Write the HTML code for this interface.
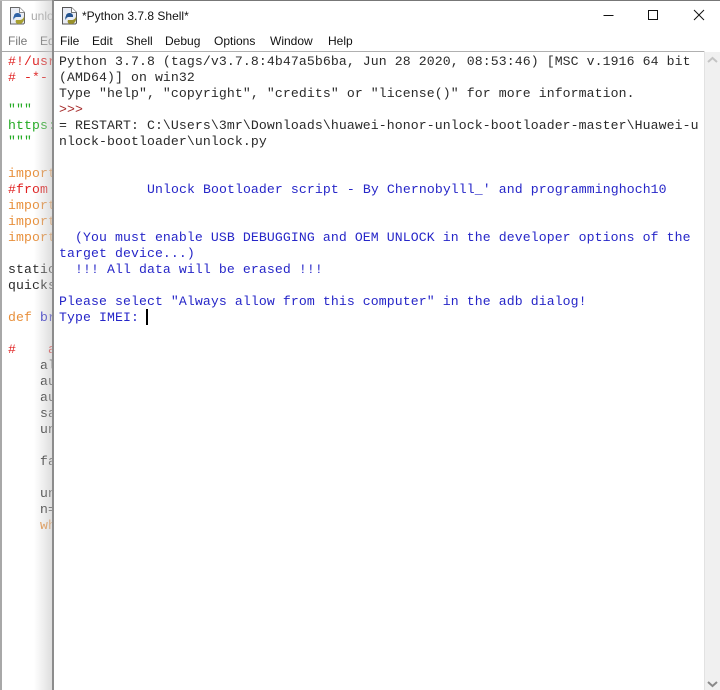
<!DOCTYPE html>
<html><head><meta charset="utf-8"><style>
html,body{margin:0;padding:0}
body{width:720px;height:690px;overflow:hidden;background:#fff;position:relative;font-family:"Liberation Sans",sans-serif}
.a{position:absolute}
.t{position:absolute;font:13.17px/16px "Liberation Mono",monospace;letter-spacing:.1px;white-space:pre;color:#2a2a2a;height:16px}
.m{position:absolute;font:12px/16px "Liberation Sans",sans-serif;top:33px;color:#111;white-space:pre}
.b{color:#2626c8}.k{color:#e8903c}.r{color:#e02020}.g{color:#22aa22}
</style></head><body>
<div class="a" style="left:0;top:0;width:2px;height:690px;background:#a8a8a8"></div>
<div class="a" style="left:2px;top:0;width:50px;height:690px;background:#fff"></div>
<div class="a" style="left:0;top:0;width:52px;height:1px;background:#bbb"></div>
<svg class="a" style="left:8px;top:6px" width="20" height="20" viewBox="0 0 20 20"><path d="M2.500 1.500h9l5 5v10.500l-1 1h-13z" fill="#e9ecf4" stroke="#666"/><path d="M11.500 1.500v5h5" fill="#fff" stroke="#888"/><path d="M6 10c0-4 7-4 7 0v1H9c-2 0-3 1-3 3-1-1-1-3 0-4z" fill="#2f62a6"/><path d="M16 10c1 4-1 8-5 8-3 0-4-2-3-4h4c2 0 4-2 4-4z" fill="#a8a030"/></svg>
<div class="a" style="left:31px;top:8px;font-size:12px;line-height:16px;color:#a8a8a8">unlo</div>
<div class="m" style="left:8px;color:#777">File</div><div class="m" style="left:40px;color:#777">Ed</div>
<div class="a" style="left:2px;top:51px;width:50px;height:1px;background:#a8a8a8"></div>
<div class="t r" style="left:8px;top:54px">#!/usr</div>
<div class="t r" style="left:8px;top:70px"># -*-</div>
<div class="t g" style="left:8px;top:102px">"""</div>
<div class="t g" style="left:8px;top:118px">https:</div>
<div class="t g" style="left:8px;top:134px">"""</div>
<div class="t k" style="left:8px;top:166px">import</div>
<div class="t r" style="left:8px;top:182px">#from</div>
<div class="t k" style="left:8px;top:198px">import</div>
<div class="t k" style="left:8px;top:214px">import</div>
<div class="t k" style="left:8px;top:230px">import</div>
<div class="t" style="left:8px;top:262px">static</div>
<div class="t" style="left:8px;top:278px">quicks</div>
<div class="t" style="left:8px;top:310px"><span class="k">def</span> <span class="b">br</span></div>
<div class="t r" style="left:8px;top:342px">#    a</div>
<div class="t" style="left:40px;top:358px">al</div>
<div class="t" style="left:40px;top:374px">au</div>
<div class="t" style="left:40px;top:390px">au</div>
<div class="t" style="left:40px;top:406px">sa</div>
<div class="t" style="left:40px;top:422px">un</div>
<div class="t" style="left:40px;top:454px">fa</div>
<div class="t" style="left:40px;top:486px">un</div>
<div class="t" style="left:40px;top:502px">n=</div>
<div class="t k" style="left:40px;top:518px">wh</div>
<div class="a" style="left:34px;top:0;width:18px;height:690px;background:linear-gradient(to right,rgba(200,200,200,0),rgba(200,200,200,.6))"></div>
<div class="a" style="left:52px;top:0;width:2px;height:690px;background:#8c8c8c"></div>
<div class="a" style="left:54px;top:0;width:666px;height:690px;background:#fff"></div>
<div class="a" style="left:54px;top:0;width:666px;height:1px;background:#777"></div>
<svg class="a" style="left:60px;top:6px" width="20" height="20" viewBox="0 0 20 20"><path d="M2.500 1.500h9l5 5v10.500l-1 1h-13z" fill="#e9ecf4" stroke="#555"/><path d="M11.500 1.500v5h5" fill="#fff" stroke="#777"/><path d="M6 10c0-4 7-4 7 0v1H9c-2 0-3 1-3 3-1-1-1-3 0-4z" fill="#24538f"/><path d="M16 10c1 4-1 8-5 8-3 0-4-2-3-4h4c2 0 4-2 4-4z" fill="#98902a"/></svg>
<div class="a" style="left:82px;top:8px;font-size:12px;line-height:16px;color:#111;white-space:pre">*Python 3.7.8 Shell*</div>
<svg class="a" style="left:600px;top:5px" width="120" height="20" viewBox="0 0 120 20" fill="none" stroke="#111"><path d="M3.500 10.500h10"/><rect x="48.500" y="5.500" width="9" height="9"/><path d="M94 5l10 10M104 5l-10 10"/></svg>
<div class="m" style="left:60px">File</div><div class="m" style="left:92px">Edit</div><div class="m" style="left:126px">Shell</div><div class="m" style="left:165px">Debug</div><div class="m" style="left:214px">Options</div><div class="m" style="left:270px">Window</div><div class="m" style="left:328px">Help</div>
<div class="a" style="left:54px;top:51px;width:651px;height:1px;background:#b0b0b0"></div>
<div class="t" style="left:59px;top:54px">Python 3.7.8 (tags/v3.7.8:4b47a5b6ba, Jun 28 2020, 08:53:46) [MSC v.1916 64 bit</div>
<div class="t" style="left:59px;top:70px">(AMD64)] on win32</div>
<div class="t" style="left:59px;top:86px">Type "help", "copyright", "credits" or "license()" for more information.</div>
<div class="t" style="left:59px;top:102px;color:#a52a2a">&gt;&gt;&gt;</div>
<div class="t" style="left:59px;top:118px">= RESTART: C:\Users\3mr\Downloads\huawei-honor-unlock-bootloader-master\Huawei-u</div>
<div class="t" style="left:59px;top:134px">nlock-bootloader\unlock.py</div>
<div class="t b" style="left:147px;top:182px">Unlock Bootloader script - By Chernobylll_' and programminghoch10</div>
<div class="t b" style="left:59px;top:230px">  (You must enable USB DEBUGGING and OEM UNLOCK in the developer options of the</div>
<div class="t b" style="left:59px;top:246px">target device...)</div>
<div class="t b" style="left:59px;top:262px">  !!! All data will be erased !!!</div>
<div class="t b" style="left:59px;top:294px">Please select "Always allow from this computer" in the adb dialog!</div>
<div class="t b" style="left:59px;top:310px">Type IMEI: </div>
<div class="a" style="left:146px;top:309px;width:2px;height:16px;background:#000"></div>
<div class="a" style="left:704px;top:51px;width:1px;height:639px;background:#e2e2e2"></div>
<div class="a" style="left:705px;top:52px;width:15px;height:638px;background:#f0f0f0"></div>
<svg class="a" style="left:705px;top:52px" width="15" height="16" fill="none" stroke="#c4c4c4" stroke-width="2"><path d="M3 10l4.500-4 4.500 4"/></svg>
<svg class="a" style="left:705px;top:678px" width="15" height="12" fill="none" stroke="#8a8a8a" stroke-width="2"><path d="M3 4l4.500 4 4.500-4"/></svg>
</body></html>
